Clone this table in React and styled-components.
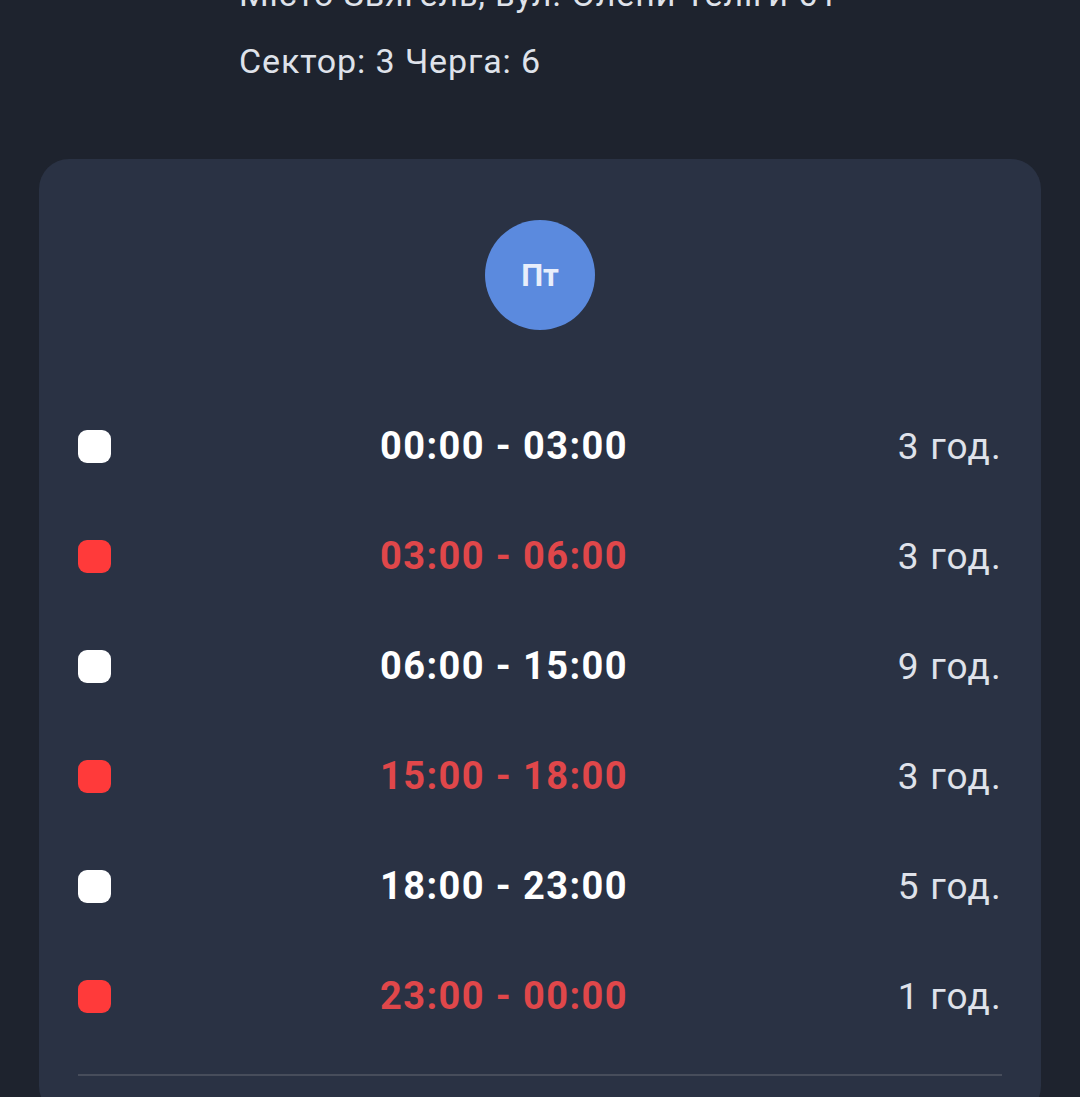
import React from "react"
import styled, { createGlobalStyle } from "styled-components"

const GlobalStyle = createGlobalStyle`
  html, body {
    margin: 0;
    padding: 0;
    background: #1e232e;
    font-family: Roboto, "Noto Sans", sans-serif;
  }
`

const slots = [
  { from: "00:00", to: "03:00", hours: 3, off: false },
  { from: "03:00", to: "06:00", hours: 3, off: true },
  { from: "06:00", to: "15:00", hours: 9, off: false },
  { from: "15:00", to: "18:00", hours: 3, off: true },
  { from: "18:00", to: "23:00", hours: 5, off: false },
  { from: "23:00", to: "00:00", hours: 1, off: true },
]

const App = () => {
  return (
    <Page>
      <GlobalStyle />
      <Address>
        <AddressLine>Місто Звягель, вул. Олени Теліги 61</AddressLine>
        <AddressLine>Сектор: 3 Черга: 6</AddressLine>
      </Address>
      <Card>
        <DayBadge>Пт</DayBadge>
        <SlotList>
          {slots.map((s) => (
            <SlotRow key={s.from}>
              <Marker $off={s.off} />
              <TimeRange $off={s.off}>
                {s.from} - {s.to}
              </TimeRange>
              <Duration>{s.hours} год.</Duration>
            </SlotRow>
          ))}
        </SlotList>
        <Divider />
      </Card>
    </Page>
  )
}

const Page = styled.div`
  width: 1080px;
  height: 1097px;
  overflow: hidden;
  background: #1e232e;
`

const Address = styled.div`
  margin-top: -26px;
  padding-left: 239px;
  display: flex;
  flex-direction: column;
  gap: 27px;
`

const AddressLine = styled.p`
  margin: 0;
  color: #dfe2ea;
  font-size: 34px;
  line-height: 40px;
  letter-spacing: 0.9px;
`

const Card = styled.section`
  margin: 78px 39px 0;
  background: #2a3244;
  border-radius: 30px;
  padding: 61px 39px 40px;
  display: flex;
  flex-direction: column;
  align-items: center;
`

const DayBadge = styled.div`
  width: 110px;
  height: 110px;
  border-radius: 50%;
  background: #5b8ade;
  color: #e8eefb;
  font-weight: 700;
  font-size: 31px;
  display: flex;
  align-items: center;
  justify-content: center;
`

const SlotList = styled.div`
  align-self: stretch;
  margin-top: 61px;
  display: flex;
  flex-direction: column;
`

const SlotRow = styled.div`
  height: 110px;
  display: grid;
  grid-template-columns: 33px 1fr 150px;
  align-items: center;
`

const Marker = styled.span`
  width: 33px;
  height: 33px;
  border-radius: 9px;
  background: ${(p) => (p.$off ? "#ff3a3a" : "#ffffff")};
`

const TimeRange = styled.span`
  text-align: center;
  padding-left: 45px;
  font-size: 38px;
  font-weight: 700;
  letter-spacing: 1.4px;
  color: ${(p) => (p.$off ? "#e0474a" : "#ffffff")};
`

const Duration = styled.span`
  text-align: right;
  font-size: 37px;
  color: #dfe2ea;
  letter-spacing: 1.2px;
`

const Divider = styled.hr`
  align-self: stretch;
  margin: 23px 0 0;
  border: none;
  height: 2px;
  background: #474d5b;
`

export default App
